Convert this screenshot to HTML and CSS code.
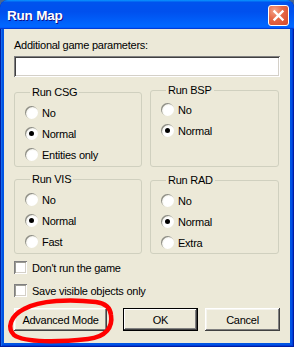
FILE: index.html
```html
<!DOCTYPE html>
<html>
<head>
<meta charset="utf-8">
<link rel="stylesheet" href="styles.css">
</head>
<body>
<div class="window">
  <div class="titlebar">
    <span class="title">Run Map</span>
    <span class="close"><svg width="19" height="19" viewBox="0 0 19 19"><path d="M5.5 5.5 L13.5 13.5 M13.5 5.5 L5.5 13.5" stroke="#fff" stroke-width="2.4" stroke-linecap="square"/></svg></span>
  </div>
  <div class="client">
    <div class="label">Additional game parameters:</div>
    <div class="textbox"></div>
    <div class="groups">
      <fieldset class="group g-csg"><legend>Run CSG</legend>
        <div class="radio"><span class="rb"></span>No</div>
        <div class="radio"><span class="rb on"></span>Normal</div>
        <div class="radio"><span class="rb"></span>Entities only</div>
      </fieldset>
      <fieldset class="group g-bsp"><legend>Run BSP</legend>
        <div class="radio"><span class="rb"></span>No</div>
        <div class="radio"><span class="rb on"></span>Normal</div>
      </fieldset>
      <fieldset class="group g-vis"><legend>Run VIS</legend>
        <div class="radio"><span class="rb"></span>No</div>
        <div class="radio"><span class="rb on"></span>Normal</div>
        <div class="radio"><span class="rb"></span>Fast</div>
      </fieldset>
      <fieldset class="group g-rad"><legend>Run RAD</legend>
        <div class="radio"><span class="rb"></span>No</div>
        <div class="radio"><span class="rb on"></span>Normal</div>
        <div class="radio"><span class="rb"></span>Extra</div>
      </fieldset>
    </div>
    <div class="check check-first"><span class="cb"></span>Don't run the game</div>
    <div class="check"><span class="cb"></span>Save visible objects only</div>
    <div class="buttons">
      <div class="btn btn-adv">Advanced Mode</div>
      <div class="btn btn-ok">OK</div>
      <div class="btn btn-cancel">Cancel</div>
    </div>
  </div>
  <svg class="annot" width="294" height="347" viewBox="0 0 294 347"><path d="M96 302 C70 299 40 300 24 309 C10 316 7 328 14 335 C25 343 60 342 88 339 C106 337 113 327 111 315 C110 306 104 303 96 302 Z" fill="none" stroke="#ff0000" stroke-width="4.5"/></svg>
</div>
</body>
</html>
```

FILE: styles.css
```css
html, body {
  margin: 0;
  padding: 0;
}
body {
  background: #4a6690;
  width: 294px;
  height: 347px;
  overflow: hidden;
}
.window {
  position: relative;
  width: 294px;
  height: 347px;
  box-sizing: border-box;
  padding: 0 4px 4px 4px;
  display: flex;
  flex-direction: column;
  background: #0054e3;
  border-radius: 8px 8px 0 0;
  box-shadow: inset 1px 0 #001ea0, inset -1px -1px #001ea0, inset 2px 0 #166aee, inset -2px -2px #003bda;
  font-family: "Liberation Sans", Arial, sans-serif;
  font-size: 11px;
  letter-spacing: -0.25px;
  color: #000;
}
.titlebar {
  height: 29px;
  margin: 0 -4px;
  flex: none;
  display: flex;
  align-items: center;
  justify-content: space-between;
  padding: 0 5px 0 7px;
  border-radius: 8px 8px 0 0;
  background: linear-gradient(to bottom, #0997ff, #0053ee 8%, #0050ee 40%, #0066ff 88%, #0066ff 93%, #005bff 95%, #003dd7 96%, #003dd7);
}
.title {
  font-family: "Liberation Sans", Arial, sans-serif;
  font-weight: bold;
  font-size: 13.5px;
  letter-spacing: -0.2px;
  color: #fff;
  text-shadow: 1px 1px #0f1089;
  margin-top: 1px;
}
.close {
  width: 21px;
  height: 21px;
  box-sizing: border-box;
  border: 1px solid #fff;
  border-radius: 3px;
  margin-top: 2px;
  display: flex;
  align-items: center;
  justify-content: center;
  background: radial-gradient(circle at 30% 25%, #f5a48a 0%, #e66a48 40%, #d5482a 100%);
}
.close svg { display: block; }
.client {
  flex: 1;
  background: #ece9d8;
  padding: 10px 10px 0 10px;
  display: flex;
  flex-direction: column;
}
.label {
  line-height: 13px;
}
.textbox {
  margin-top: 4px;
  height: 21px;
  width: 266px;
  background: #fff;
  box-shadow: inset 1px 1px #808080, inset -1px -1px #fff, inset 2px 2px #404040, inset -2px -2px #d4d0c8;
}
.groups {
  margin-top: 9px;
  display: grid;
  grid-template-columns: 128px 129px;
  grid-template-rows: 81px 81px;
  column-gap: 8px;
  row-gap: 6px;
}
.group {
  margin: 0;
  min-width: 0;
  box-sizing: border-box;
  border: 1px solid #d0d0bf;
  border-radius: 3px;
  padding: 3px 6px 0 10px;
}
.g-bsp { margin-top: -2px; height: 83px; }
.g-rad { margin-top: 1px; height: 80px; }
.group legend {
  padding: 0 2px;
  margin-left: 5px;
  line-height: 13px;
  color: #000;
}
.radio {
  height: 21px;
  display: flex;
  align-items: center;
}
.g-bsp .radio:first-of-type { margin-top: -1px; }
.rb {
  width: 13px;
  height: 13px;
  box-sizing: border-box;
  border-radius: 50%;
  margin-right: 4px;
  flex: none;
  position: relative;
  background: radial-gradient(circle at 60% 60%, #ffffff 0%, #ffffff 45%, #f2f1ea 60%, #c9c7bb 80%, #9a9a90 100%);
  box-shadow: inset 1px 1px 0 #8e8e85;
}
.rb.on::after {
  content: "";
  position: absolute;
  left: 4px;
  top: 4px;
  width: 5px;
  height: 5px;
  border-radius: 50%;
  background: #000;
}
.check {
  height: 23px;
  display: flex;
  align-items: center;
}
.check-first { margin-top: 2px; }
.cb {
  width: 13px;
  height: 13px;
  box-sizing: border-box;
  margin-right: 5px;
  background: #fff;
  box-shadow: inset 1px 1px #808080, inset -1px -1px #fff, inset 2px 2px #9c9c94, inset -2px -2px #d4d0c8;
}
.buttons {
  margin-top: 6px;
  display: flex;
}
.btn {
  height: 23px;
  box-sizing: border-box;
  display: flex;
  align-items: center;
  justify-content: center;
  background: #ece9d8;
  box-shadow: inset -1px -1px #404040, inset 1px 1px #fff, inset -2px -2px #808080, inset 2px 2px #f5f4ee;
}
.btn-adv { width: 93px; }
.btn-ok {
  width: 75px;
  margin-left: 16px;
  box-shadow: inset 0 0 0 1px #000, inset -2px -2px #404040, inset 2px 2px #fff, inset -3px -3px #808080;
}
.btn-cancel { width: 75px; margin-left: 7px; }
.annot {
  position: absolute;
  left: 0;
  top: 0;
  pointer-events: none;
}
```
